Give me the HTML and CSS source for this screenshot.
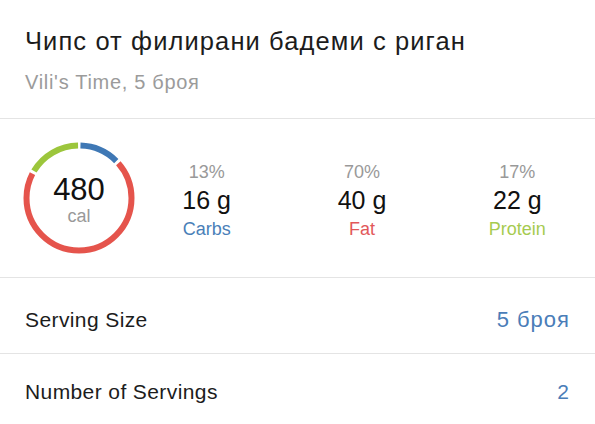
FILE: index.html
```html
<!DOCTYPE html>
<html lang="bg">
  <head>
    <meta charset="UTF-8" />
    <meta name="viewport" content="width=device-width, initial-scale=1.0" />
    <title>Чипс от филирани бадеми с риган</title>
    <link rel="stylesheet" href="styles.css">
  </head>
  <body>
    <div class="header">
      <h1 class="food-name">Чипс от филирани бадеми с риган</h1>
      <div class="food-brand">Vili's Time, 5 броя</div>
    </div>

    <div class="summary">
      <div class="ring">
        <svg width="112" height="112" viewBox="0 0 112 112">
          <g transform="rotate(-90 56 56)" fill="none" stroke-width="6">
            <circle class="arc-carbs" cx="56" cy="56" r="52.5" stroke-dasharray="39.88 400" stroke-dashoffset="-1.5" />
            <circle class="arc-fat" cx="56" cy="56" r="52.5" stroke-dasharray="227.91 400" stroke-dashoffset="-44.38" />
            <circle class="arc-protein" cx="56" cy="56" r="52.5" stroke-dasharray="53.08 400" stroke-dashoffset="-275.29" />
          </g>
        </svg>
        <div class="ring-label">
          <div class="cal-value">480</div>
          <div class="cal-unit">cal</div>
        </div>
      </div>

      <div class="macros">
        <div class="macro">
          <div class="macro-pct">13%</div>
          <div class="macro-value">16 g</div>
          <div class="macro-name carbs">Carbs</div>
        </div>
        <div class="macro">
          <div class="macro-pct">70%</div>
          <div class="macro-value">40 g</div>
          <div class="macro-name fat">Fat</div>
        </div>
        <div class="macro">
          <div class="macro-pct">17%</div>
          <div class="macro-value">22 g</div>
          <div class="macro-name protein">Protein</div>
        </div>
      </div>
    </div>

    <div class="row row-first">
      <span class="row-label">Serving Size</span>
      <span class="row-value wide">5 броя</span>
    </div>
    <div class="row">
      <span class="row-label">Number of Servings</span>
      <span class="row-value">2</span>
    </div>
  </body>
</html>
```

FILE: styles.css
```css
body {
  font-family: "Liberation Sans", Arial, sans-serif;
  margin: 0;
  background-color: #fff;
  color: #1c1c1c;
}
.header {
  padding: 26px 25px 24px;
  border-bottom: 1px solid #e4e4e4;
}
.food-name {
  margin: 0;
  font-size: 25.5px;
  line-height: 30px;
  font-weight: normal;
  letter-spacing: 1.1px;
  color: #1c1c1c;
  white-space: nowrap;
}
.food-brand {
  margin-top: 14px;
  font-size: 20px;
  line-height: 24px;
  letter-spacing: 0.7px;
  color: #9b9b9b;
}
.summary {
  display: flex;
  align-items: center;
  padding: 23px 0 23px 23px;
  border-bottom: 1px solid #e4e4e4;
}
.ring {
  position: relative;
  width: 112px;
  height: 112px;
  flex-shrink: 0;
}
.ring svg {
  display: block;
}
.arc-carbs {
  stroke: #3f78b5;
}
.arc-fat {
  stroke: #e5544c;
}
.arc-protein {
  stroke: #9cc63c;
}
.ring-label {
  position: absolute;
  top: 0;
  left: 0;
  right: 0;
  bottom: 0;
  display: flex;
  flex-direction: column;
  align-items: center;
  justify-content: center;
  padding-top: 4px;
}
.cal-value {
  font-size: 31px;
  line-height: 32px;
  color: #111;
}
.cal-unit {
  font-size: 18px;
  line-height: 20px;
  color: #999;
}
.macros {
  flex: 1;
  display: grid;
  grid-template-columns: repeat(3, 1fr);
  margin-left: -6px;
  padding-top: 5px;
}
.macro {
  text-align: center;
}
.macro-pct {
  font-size: 18px;
  line-height: 20px;
  color: #999;
}
.macro-value {
  margin-top: 4px;
  font-size: 25px;
  line-height: 28px;
  color: #111;
}
.macro-name {
  margin-top: 4px;
  font-size: 18px;
  line-height: 22px;
}
.carbs {
  color: #4a7fb8;
}
.fat {
  color: #e2585a;
}
.protein {
  color: #a6cb50;
}
.row {
  display: flex;
  justify-content: space-between;
  align-items: center;
  height: 75px;
  padding: 0 26px 0 25px;
  border-bottom: 1px solid #e4e4e4;
  font-size: 21px;
}
.row-first {
  padding-top: 8px;
  height: 67px;
}
.row-label {
  letter-spacing: 0.4px;
  color: #1c1c1c;
}
.row-value {
  color: #4a7db8;
}
.row-value.wide {
  font-size: 22px;
  letter-spacing: 1px;
  margin-right: -1px;
}
```
